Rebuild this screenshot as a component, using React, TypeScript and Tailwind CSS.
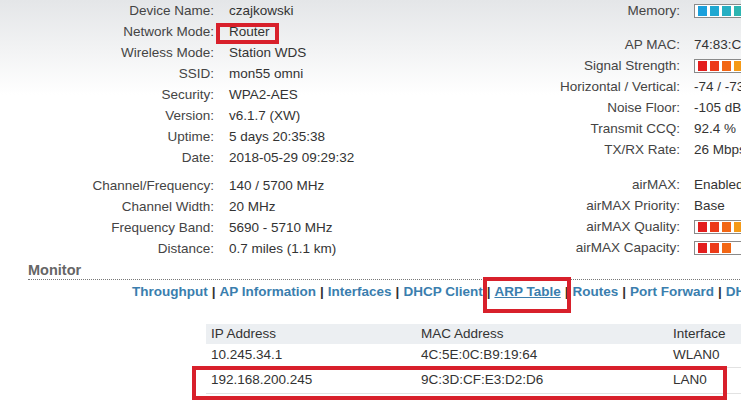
const leftTop: [string, string][] = [
  ["Device Name:", "czajkowski"],
  ["Network Mode:", "Router"],
  ["Wireless Mode:", "Station WDS"],
  ["SSID:", "mon55 omni"],
  ["Security:", "WPA2-AES"],
  ["Version:", "v6.1.7 (XW)"],
  ["Uptime:", "5 days 20:35:38"],
  ["Date:", "2018-05-29 09:29:32"],
];

const leftBottom: [string, string][] = [
  ["Channel/Frequency:", "140 / 5700 MHz"],
  ["Channel Width:", "20 MHz"],
  ["Frequency Band:", "5690 - 5710 MHz"],
  ["Distance:", "0.7 miles (1.1 km)"],
];

const memoryColors = ["#1aa0dc", "#1fa8d2", "#26afc3", "#2db5b1", "#34b9a0", "#3cbd8f"];
const signalColors = ["#e31e1e", "#ec3a18", "#f26614", "#f59a17", "#f7c81c", "#f2dc20"];
const qualityColors = ["#e31e1e", "#ec3a18", "#f26614", "#f59a17", "#f7c81c", "#f2dc20"];
const capacityColors = ["#e31e1e", "#ec3a18", "#f26614"];

const Bar = ({ colors }: { colors: string[] }) => (
  <div className="flex h-[14px] w-[120px] items-center gap-[3px] border border-[#8a8a8a] bg-white pl-[3px]">
    {colors.map((c, i) => (
      <span key={i} className="h-[10px] w-[9px]" style={{ backgroundColor: c }} />
    ))}
  </div>
);

type RightRow = { label: string; value?: string; bar?: string[]; gap?: string };

const rightRows: RightRow[] = [
  { label: "Memory:", bar: memoryColors },
  { label: "AP MAC:", value: "74:83:C2:1A:0B:44", gap: "mt-[13px]" },
  { label: "Signal Strength:", bar: signalColors },
  { label: "Horizontal / Vertical:", value: "-74 / -73 dBm" },
  { label: "Noise Floor:", value: "-105 dBm" },
  { label: "Transmit CCQ:", value: "92.4 %" },
  { label: "TX/RX Rate:", value: "26 Mbps / 26 Mbps" },
  { label: "airMAX:", value: "Enabled", gap: "mt-[14px]" },
  { label: "airMAX Priority:", value: "Base" },
  { label: "airMAX Quality:", bar: qualityColors },
  { label: "airMAX Capacity:", bar: capacityColors },
];

const tabs = ["Throughput", "AP Information", "Interfaces", "DHCP Client", "ARP Table", "Routes", "Port Forward", "DHCP Leases", "Log"];

const arpRows = [
  { ip: "10.245.34.1", mac: "4C:5E:0C:B9:19:64", iface: "WLAN0", h: "h-[24px]" },
  { ip: "192.168.200.245", mac: "9C:3D:CF:E3:D2:D6", iface: "LAN0", h: "h-[26px]", marked: true },
];

export default function App() {
  return (
    <div className="relative h-[414px] w-[741px] overflow-hidden bg-[linear-gradient(to_bottom,#e4e6e8_0px,#ffffff_95px)] font-['Liberation_Sans',Arial,sans-serif] text-[13.5px] text-[#333]">
      <div className="flex w-[1100px] items-start">
        {/* left status block */}
        <div className="w-[490px] shrink-0">
          <div className="grid grid-cols-[214px_1fr] gap-x-[15px] leading-[21px]">
            {leftTop.map(([l, v]) => (
              <div key={l} className="contents">
                <span className="text-right text-[#444]">{l}</span>
                <span className="relative whitespace-nowrap">
                  {v}
                  {l === "Network Mode:" && (
                    <span className="absolute left-[-13px] top-[2px] h-[21px] w-[63px] border-4 border-[#d8202b]" />
                  )}
                </span>
              </div>
            ))}
          </div>
          <div className="mt-[7px] grid grid-cols-[214px_1fr] gap-x-[15px] leading-[21px]">
            {leftBottom.map(([l, v]) => (
              <div key={l} className="contents">
                <span className="text-right text-[#444]">{l}</span>
                <span className="whitespace-nowrap">{v}</span>
              </div>
            ))}
          </div>
        </div>

        {/* right status block */}
        <div className="grid grid-cols-[190px_1fr] gap-x-[14px] leading-[21px]">
          {rightRows.map((r) => (
            <div key={r.label} className="contents">
              <span className={`whitespace-nowrap text-right text-[#444] ${r.gap ?? ""}`}>{r.label}</span>
              <span className={`flex items-center whitespace-nowrap ${r.gap ?? ""}`}>
                {r.bar ? <Bar colors={r.bar} /> : r.value}
              </span>
            </div>
          ))}
        </div>
      </div>

      {/* Monitor heading */}
      <div className="ml-[28px] mt-[3px] w-[1000px] border-b border-dotted border-[#777] text-[14.5px] font-bold leading-[17px] text-[#666]">
        Monitor
      </div>

      {/* tabs */}
      <div className="mt-[3px] flex whitespace-nowrap pl-[132px] text-[13.5px] font-bold leading-[17px]">
        {tabs.map((t, i) => (
          <span key={t} className="flex">
            {i > 0 && <span className="mx-[4px] text-[#333]">|</span>}
            <span className={`relative text-[#3a7eae] ${t === "ARP Table" ? "underline" : ""}`}>
              {t}
              {t === "ARP Table" && (
                <span className="absolute left-[-11px] top-[-6px] h-[36px] w-[88px] border-4 border-[#d8202b]" />
              )}
            </span>
          </span>
        ))}
      </div>

      {/* ARP table */}
      <div className="ml-[206px] mt-[24px] w-[700px]">
        <div className="grid h-[20px] grid-cols-[210px_252px_1fr] items-center bg-[#eceff2] leading-[20px]">
          <span className="pl-[5px]">IP Address</span>
          <span className="pl-[5px]">MAC Address</span>
          <span className="pl-[5px]">Interface</span>
        </div>
        {arpRows.map((r) => (
          <div key={r.ip} className={`relative grid grid-cols-[210px_252px_1fr] items-center border-b border-[#e2e2e2] ${r.h}`}>
            <span className="pl-[5px]">{r.ip}</span>
            <span className="pl-[5px]">{r.mac}</span>
            <span className="pl-[5px]">{r.iface}</span>
            {r.marked && (
              <span className="absolute left-[-14px] top-[-2px] h-[34px] w-[535px] border-4 border-[#d8202b]" />
            )}
          </div>
        ))}
      </div>
    </div>
  );
}
